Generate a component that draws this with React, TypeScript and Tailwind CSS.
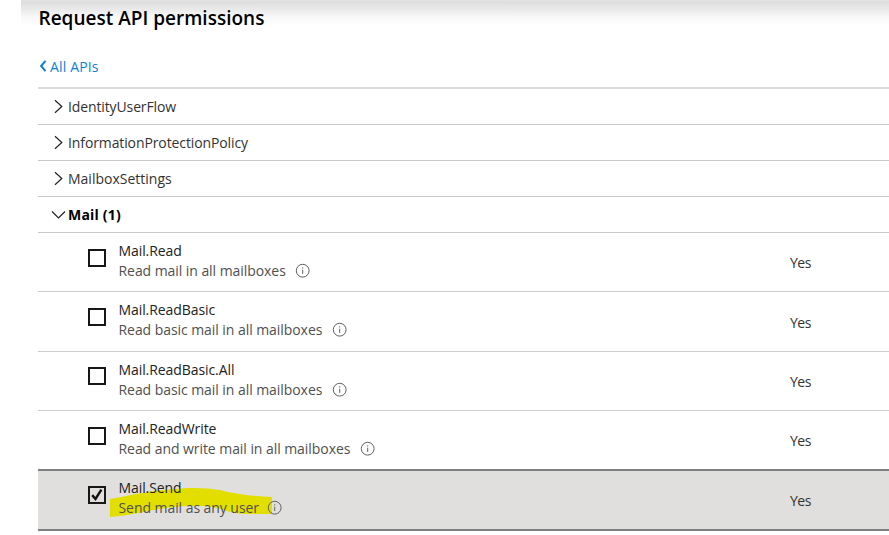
import React from "react";

const groups = [
  { name: "IdentityUserFlow", spacing: "tracking-[-0.12px]" },
  { name: "InformationProtectionPolicy", spacing: "tracking-[-0.11px]" },
  { name: "MailboxSettings", spacing: "tracking-[0px]" },
];

const permissions = [
  { name: "Mail.Read", text: "Read mail in all mailboxes", gap: "w-[167px]", checked: false },
  { name: "Mail.ReadBasic", text: "Read basic mail in all mailboxes", gap: "w-[204px]", checked: false },
  { name: "Mail.ReadBasic.All", text: "Read basic mail in all mailboxes", gap: "w-[204px]", checked: false },
  { name: "Mail.ReadWrite", text: "Read and write mail in all mailboxes", gap: "w-[231.5px]", checked: false },
  { name: "Mail.Send", text: "Send mail as any user", gap: "w-[139px]", checked: true },
];

function InfoIcon() {
  return (
    <svg className="h-4 w-4 shrink-0" viewBox="0 0 16 16" fill="none" stroke="#606060" strokeWidth="1">
      <circle cx="7.7" cy="7.7" r="6.4" />
      <path d="M7.7 6.7v4.2M7.7 4.3v1.2" />
    </svg>
  );
}

function Checkbox({ checked }: { checked: boolean }) {
  return (
    <span className="h-[18px] w-[18px] shrink-0 border-2 border-[#171717]">
      {checked && (
        <svg className="block h-3.5 w-3.5" viewBox="0 0 14 14" fill="none" stroke="#111" strokeWidth="2.4">
          <path d="M2.2 7.1L5.5 11L11.4 1.6" />
        </svg>
      )}
    </span>
  );
}

export default function App() {
  return (
    <div className="h-[535px] w-[889px] overflow-hidden bg-white pl-[21px] font-['Open_Sans','Noto_Sans',sans-serif] text-[14px] text-[#333]">
      <header className="h-[87px] bg-[linear-gradient(to_bottom,#e3e3e3_0px,#dedede_2px,#e9e9e9_9px,#f8f8f8_17px,#ffffff_26px)] pl-[17.5px]">
        <h1 className="h-[35px] text-[19px] leading-[36px] font-semibold tracking-[0.01px] whitespace-nowrap text-black">
          <span>Request API permissions</span>
        </h1>
        <a className="mt-[18px] flex h-[26px] items-center text-[#0f7fd6]">
          <svg className="mr-[0.5px] h-3 w-[11px] shrink-0" viewBox="0 0 11 12" fill="none" stroke="currentColor" strokeWidth="2">
            <path d="M6.5 0.8L2.1 6L6.5 11.2" />
          </svg>
          <span className="tracking-[0.15px]">All APIs</span>
        </a>
      </header>
      <main className="ml-[17px] border-t-2 border-[#dcdcdc]">
        {groups.map((group) => (
          <div key={group.name} className="flex h-[36px] items-center border-b border-[#c8c8c8] pl-[15px]">
            <svg className="mr-[4px] h-4 w-[11px] shrink-0" viewBox="0 0 11 16" fill="none" stroke="#222" strokeWidth="1.2">
              <path d="M2 1.3L8.8 7.5L2 13.7" />
            </svg>
            <span className={group.spacing}>{group.name}</span>
          </div>
        ))}
        <div className="flex h-[36px] items-center border-b border-[#c8c8c8] pl-[13px] font-bold text-black">
          <svg className="mr-[2px] h-4 w-[15px] shrink-0" viewBox="0 0 15 16" fill="none" stroke="#222" strokeWidth="1.2">
            <path d="M1 4.5L7.5 11L14 4.5" />
          </svg>
          <span className="tracking-[0.2px]">Mail (1)</span>
        </div>
        {permissions.map((p) => (
          <div
            key={p.name}
            className={
              p.checked
                ? "relative -mt-px flex h-[61.5px] border-y-2 border-[#808080] bg-[#e0dfdd] pl-[49.5px]"
                : "flex h-[59.3px] border-b border-[#cccccc] pl-[49.5px]"
            }
          >
            <div className={p.checked ? "mt-[15px] flex" : "mt-[15.9px] flex"}>
              <Checkbox checked={p.checked} />
            </div>
            {p.checked && (
              <svg className="absolute top-[15px] left-[71px] h-8 w-[166px]" viewBox="0 0 166 32" fill="#e2df00">
                <path d="M1 13C23 9 43 4 66 3C83 1 99 2 111 4C125 8 143 10 163 11V28H140C116 28 113 20 89 20C55 19 35 28 1 31Z" />
              </svg>
            )}
            <div className={"relative ml-[13px] w-[671px] " + (p.checked ? "pt-[7.2px]" : "pt-[8px]")}>
              <div className="h-5 leading-5 tracking-[-0.08px] text-[#222]"><span>{p.name}</span></div>
              <div className="flex h-5 items-center leading-5 whitespace-nowrap text-[#505050]">
                <span className={"mr-[9.5px] shrink-0 tracking-[-0.06px] " + p.gap}><span>{p.text}</span></span>
                <InfoIcon />
              </div>
            </div>
            <div className={"tracking-[-0.5px] leading-5 " + (p.checked ? "pt-[19.4px]" : "pt-[20.4px]")}><span className="pl-[0.5px]">Yes</span></div>
          </div>
        ))}
      </main>
    </div>
  );
}
